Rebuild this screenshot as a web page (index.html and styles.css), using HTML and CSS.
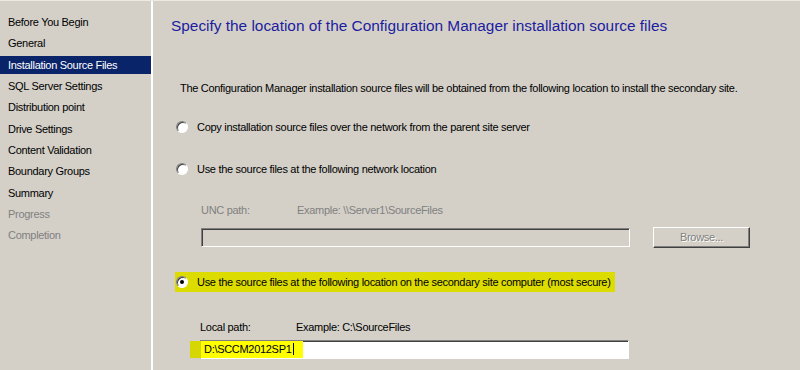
FILE: index.html
```html
<!DOCTYPE html>
<html lang="en">
<head>
    <meta charset="UTF-8">
    <title>Create Secondary Site Wizard</title>
    <link rel="stylesheet" href="styles.css">
</head>
<body>
    <div class="wizard">
        <nav class="steps">
            <div class="step">Before You Begin</div>
            <div class="step">General</div>
            <div class="step active">Installation Source Files</div>
            <div class="step">SQL Server Settings</div>
            <div class="step">Distribution point</div>
            <div class="step">Drive Settings</div>
            <div class="step">Content Validation</div>
            <div class="step">Boundary Groups</div>
            <div class="step">Summary</div>
            <div class="step disabled">Progress</div>
            <div class="step disabled">Completion</div>
        </nav>

        <main class="page">
            <h1 class="page-title">Specify the location of the Configuration Manager installation source files</h1>
            <p class="intro">The Configuration Manager installation source files will be obtained from the following location to install the secondary site.</p>

            <div class="option option-copy">
                <span class="radio"></span>
                <span>Copy installation source files over the network from the parent site server</span>
            </div>

            <div class="option option-network">
                <span class="radio"></span>
                <span>Use the source files at the following network location</span>
            </div>

            <div class="path-block muted">
                <div class="path-labels">
                    <span class="path-label">UNC path:</span>
                    <span>Example: \\Server1\SourceFiles</span>
                </div>
                <div class="path-row">
                    <div class="field field-disabled"></div>
                    <div class="button">Browse...</div>
                </div>
            </div>

            <div class="option option-local">
                <span class="marker">
                    <span class="radio checked"></span>
                    <span>Use the source files at the following location on the secondary site computer (most secure)</span>
                </span>
            </div>

            <div class="path-block local">
                <div class="path-labels">
                    <span class="path-label">Local path:</span>
                    <span>Example: C:\SourceFiles</span>
                </div>
                <div class="path-row">
                    <div class="field"><span class="marker-bright">D:\SCCM2012SP1<span class="caret"></span></span></div>
                </div>
            </div>
        </main>
    </div>
</body>
</html>
```

FILE: styles.css
```css
body {
    margin: 0;
    background-color: #d4d0c8;
    font-family: "Liberation Sans", Arial, sans-serif;
    font-size: 11px;
    letter-spacing: -0.3px;
    color: #000;
}

.wizard {
    display: flex;
    height: 370px;
    overflow: hidden;
    border-top: 1px solid #ece9e2;
    box-sizing: border-box;
}

.steps {
    width: 151px;
    flex-shrink: 0;
    border-right: 2px solid #fff;
    padding-top: 12px;
    display: flex;
    flex-direction: column;
    gap: 3.35px;
}

.step {
    height: 18px;
    line-height: 18px;
    padding-left: 8px;
    white-space: nowrap;
}

.step.active {
    background-color: #0a246a;
    color: #fff;
}

.step.disabled {
    color: #808080;
}

.page {
    flex: 1;
    padding-left: 18px;
}

.page-title {
    margin: 15px 0 0;
    font-size: 15.4px;
    font-weight: normal;
    letter-spacing: 0;
    line-height: 20px;
    color: #1c1ca0;
    white-space: nowrap;
}

.intro {
    margin: 45px 0 0 9px;
    line-height: 14px;
    white-space: nowrap;
}

.option {
    display: flex;
    align-items: center;
    height: 20px;
    margin-left: 5px;
    white-space: nowrap;
}

.option-copy {
    margin-top: 22px;
}

.option-network {
    margin-top: 22px;
}

.option-local {
    margin-top: 24px;
}

.radio {
    width: 10px;
    height: 10px;
    border-radius: 50%;
    background-color: #fff;
    border: 1px solid;
    border-color: #808080 #fff #fff #808080;
    box-shadow: inset 1px 1px 0 #404040, 0 0 0 1px #d4d0c8;
    margin-right: 9px;
    flex-shrink: 0;
    position: relative;
}

.radio.checked::after {
    content: "";
    position: absolute;
    left: 3px;
    top: 3px;
    width: 4px;
    height: 4px;
    border-radius: 50%;
    background-color: #000;
}

.marker {
    display: flex;
    align-items: center;
    height: 20px;
    margin-left: -1px;
    padding: 0 4px 0 1px;
    background-color: #dcdc00;
}

.marker .radio {
    box-shadow: inset 1px 1px 0 #404040;
}

.path-block {
    margin-left: 30px;
}

.path-block.muted {
    margin-top: 24px;
    color: #808080;
}

.path-block.local {
    margin-top: 28px;
}

.path-labels {
    display: flex;
    height: 14px;
    line-height: 14px;
    white-space: nowrap;
}

.path-label {
    width: 96px;
}

.local .path-labels {
    margin-left: -1px;
}

.path-row {
    display: flex;
    align-items: center;
    gap: 23px;
    margin-top: 10px;
}

.local .path-row {
    margin-top: 6px;
}

.field {
    width: 429px;
    height: 19px;
    box-sizing: border-box;
    border: 1px solid;
    border-color: #808080 #fff #fff #808080;
    box-shadow: inset 1px 1px 0 #404040;
    background-color: #fff;
    line-height: 16px;
    padding-left: 2px;
    white-space: nowrap;
}

.local .field {
    margin-left: -1px;
}

.field-disabled {
    background-color: #d4d0c8;
}

.marker-bright {
    display: inline-block;
    height: 17px;
    margin: -1px 0 0 -13px;
    padding: 0 9px 0 14px;
    background: linear-gradient(to right, #d6d600 0 11px, #ffff00 11px);
    color: #000;
}

.caret {
    display: inline-block;
    width: 1px;
    height: 12px;
    margin-left: 1px;
    vertical-align: -2px;
    background-color: #000;
}

.button {
    width: 97px;
    height: 21px;
    box-sizing: border-box;
    border: 1px solid;
    border-color: #fff #404040 #404040 #fff;
    box-shadow: inset -1px -1px 0 #808080;
    line-height: 19px;
    text-align: center;
    color: #808080;
    text-shadow: 1px 1px 0 #fff;
}
```
